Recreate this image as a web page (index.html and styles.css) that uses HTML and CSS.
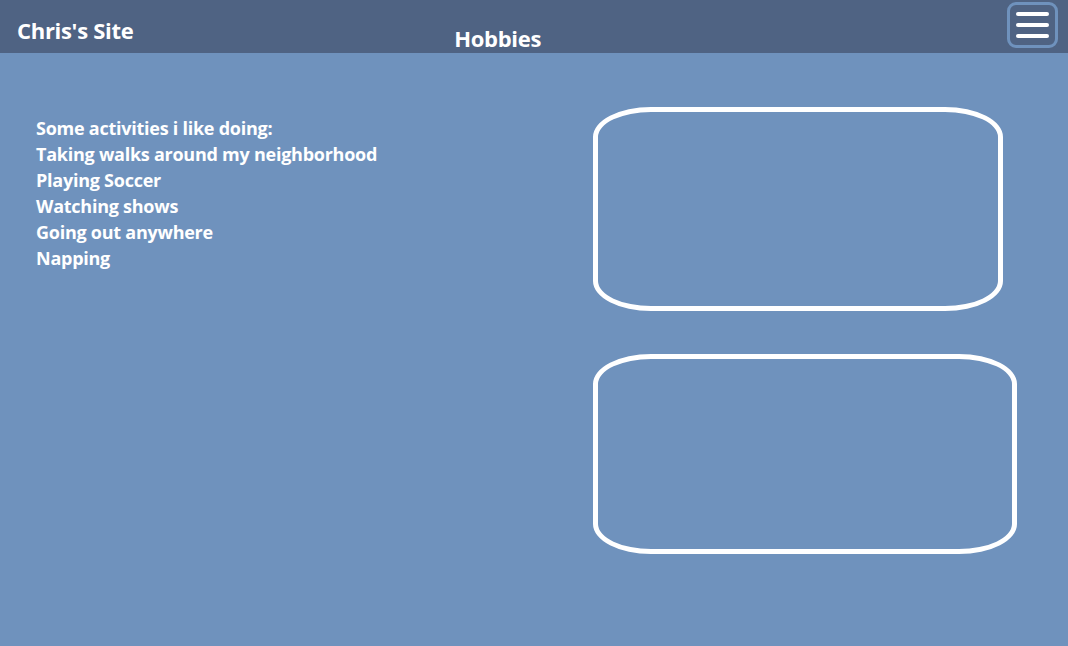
FILE: index.html
```html
<!DOCTYPE html>
<html lang="en">
<head>
  <meta charset="UTF-8">
  <meta name="viewport" content="width=device-width, initial-scale=1.0">
  <title>Hobbies | Chris's Site</title>
  <link rel="stylesheet" href="styles.css">
</head>
<body>

  <header class="header">
    <div class="header__logo">Chris's Site</div>
    <h1 class="header__title">Hobbies</h1>
    <button class="menu-btn" type="button" aria-label="Menu">
      <span></span>
      <span></span>
      <span></span>
    </button>
  </header>

  <main class="main">
    <div class="hobbies">
      <p>Some activities i like doing:</p>
      <p>Taking walks around my neighborhood</p>
      <p>Playing Soccer</p>
      <p>Watching shows</p>
      <p>Going out anywhere</p>
      <p>Napping</p>
    </div>

    <div class="frames">
      <div class="frame frame_top"></div>
      <div class="frame frame_bottom"></div>
    </div>
  </main>

</body>
</html>
```

FILE: styles.css
```css
*, *:after, *:before {
  box-sizing: border-box;
}

html, body {
  margin: 0;
  height: 100%;
  background-color: #6f92bd;
  font-family: 'Open Sans', Lato, sans-serif;
  font-weight: 700;
  color: #fff;
}

.header {
  display: flex;
  align-items: flex-start;
  height: 53px;
  padding: 0 10px 0 17px;
  background-color: #4f6383;
}

.header__logo {
  margin-top: 19px;
  font-size: 22px;
  line-height: 1;
  letter-spacing: -0.3px;
}

.header__title {
  flex: 1;
  margin: 27px 0 0;
  padding-right: 145px;
  font-size: 22px;
  line-height: 1;
  text-align: center;
  letter-spacing: -0.3px;
}

.menu-btn {
  display: flex;
  flex-direction: column;
  justify-content: center;
  gap: 7px;
  width: 51px;
  height: 46px;
  margin-top: 2px;
  padding: 0 6px;
  background: none;
  border: 3px solid #6f92bd;
  border-radius: 9px;
  cursor: pointer;
}

.menu-btn span {
  display: block;
  height: 4px;
  background-color: #fff;
  border-radius: 2px;
}

.main {
  display: flex;
  padding: 54px 0 0 36px;
}

.hobbies {
  width: 557px;
  padding-top: 8px;
  font-size: 18px;
  line-height: 26px;
  letter-spacing: -0.25px;
}

.hobbies p {
  margin: 0;
}

.frames {
  display: flex;
  flex-direction: column;
  gap: 43px;
}

.frame {
  border: 5px solid #fff;
  border-radius: 58px / 30px;
}

.frame_top {
  width: 410px;
  height: 204px;
}

.frame_bottom {
  width: 424px;
  height: 200px;
}
```
